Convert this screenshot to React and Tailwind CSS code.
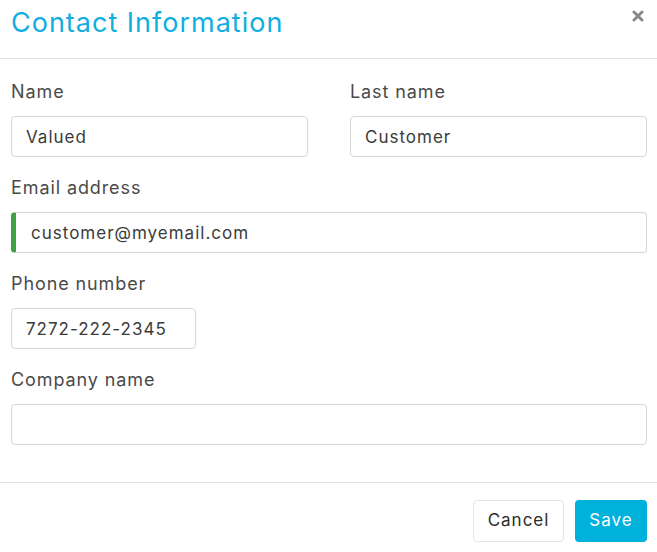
import React from "react";

function Field({ label, value, className = "", accent = false }) {
  return (
    <div className={`flex flex-col ${className}`}>
      <label className="text-[18px] leading-6 tracking-[0.9px] text-[#4a4a4a] mb-3">{label}</label>
      <div
        className={`h-[41px] flex items-center pt-[2px] bg-white border border-[#d3d6dc] rounded-[4px] text-[17px] tracking-[1px] text-[#3b3b3b] ${
          accent ? "border-l-[5px] border-l-[#43a047] pl-[15px]" : "pl-[14px]"
        }`}
      >
        {value}
      </div>
    </div>
  );
}

export default function App() {
  return (
    <div className="w-[657px] h-[552px] bg-white overflow-hidden" style={{ fontFamily: "Inter, 'Noto Sans', sans-serif" }}>
      {/* header */}
      <div className="h-[59px] border-b border-[#e2e2e2] flex items-start justify-between pl-[11px] pr-[10px]">
        <h1 className="text-[27px] leading-none tracking-[1px] font-normal text-[#10aee0] mt-[9px]">Contact Information</h1>
        <svg width="12" height="12" viewBox="0 0 12 12" className="mt-[10px] mr-[3px]">
          <path d="M2 2 L10 10 M10 2 L2 10" stroke="#888" strokeWidth="3" strokeLinecap="round" />
        </svg>
      </div>

      {/* body */}
      <div className="pl-[11px] pr-[10px] pt-[21px] pb-[37px] border-b border-[#e2e2e2] flex flex-col gap-[19px]">
        <div className="grid grid-cols-2 gap-[42px]">
          <Field label="Name" value="Valued" />
          <Field label="Last name" value="Customer" />
        </div>
        <Field label="Email address" value="customer@myemail.com" accent />
        <Field label="Phone number" value="7272-222-2345" className="w-[185px]" />
        <Field label="Company name" value="" />
      </div>

      {/* footer */}
      <div className="flex justify-end gap-[11px] pt-[17px] pr-[10px]">
        <button className="h-[42px] w-[91px] border border-[#e5e5e8] rounded-[4px] bg-white text-[17px] tracking-[1px] text-[#2b2b2b]">
          Cancel
        </button>
        <button className="h-[42px] w-[72px] rounded-[4px] bg-[#00b1dc] text-[17px] tracking-[1px] text-white">
          Save
        </button>
      </div>
    </div>
  );
}
